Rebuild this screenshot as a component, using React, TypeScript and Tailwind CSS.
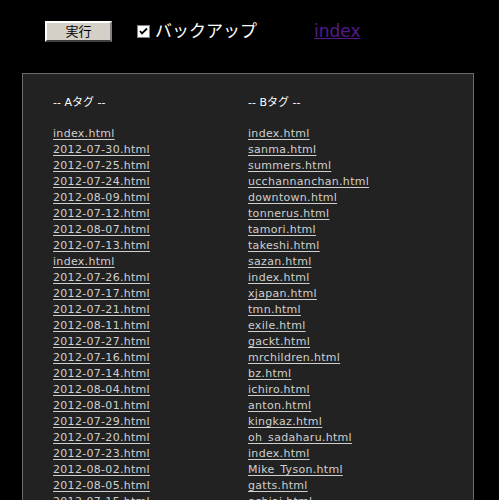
import React from "react";

const aTags = [
  "index.html",
  "2012-07-30.html",
  "2012-07-25.html",
  "2012-07-24.html",
  "2012-08-09.html",
  "2012-07-12.html",
  "2012-08-07.html",
  "2012-07-13.html",
  "index.html",
  "2012-07-26.html",
  "2012-07-17.html",
  "2012-07-21.html",
  "2012-08-11.html",
  "2012-07-27.html",
  "2012-07-16.html",
  "2012-07-14.html",
  "2012-08-04.html",
  "2012-08-01.html",
  "2012-07-29.html",
  "2012-07-20.html",
  "2012-07-23.html",
  "2012-08-02.html",
  "2012-08-05.html",
  "2012-07-15.html",
];

const bTags = [
  "index.html",
  "sanma.html",
  "summers.html",
  "ucchannanchan.html",
  "downtown.html",
  "tonnerus.html",
  "tamori.html",
  "takeshi.html",
  "sazan.html",
  "index.html",
  "xjapan.html",
  "tmn.html",
  "exile.html",
  "gackt.html",
  "mrchildren.html",
  "bz.html",
  "ichiro.html",
  "anton.html",
  "kingkaz.html",
  "oh_sadaharu.html",
  "index.html",
  "Mike_Tyson.html",
  "gatts.html",
  "ochiai.html",
];

const TagColumn: React.FC<{ title: string; items: string[] }> = ({ title, items }) => {
  return (
    <div className="w-[195px] shrink-0">
      <p className="text-[11px] leading-[16px] text-white">{title}</p>
      <ul className="mt-[15px]">
        {items.map((item, i) => (
          <li key={i} className="text-[11px] leading-[16px] tracking-[0.3px]">
            <a href="#" className="text-[#cfcfcf] underline underline-offset-2">
              {item}
            </a>
          </li>
        ))}
      </ul>
    </div>
  );
};

export default function App() {
  return (
    <div
      className="h-[500px] overflow-hidden bg-black"
      style={{ fontFamily: '"DejaVu Sans", "Noto Sans CJK JP", sans-serif' }}
    >
      <div className="flex items-center pt-[21px] pl-[45px] h-[21px] box-content">
        <button className="w-[67px] h-[21px] bg-[#d4d0c8] text-black text-[13px] leading-none border-2 border-t-white border-l-white border-b-[#404040] border-r-[#808080]">
          実行
        </button>
        <label className="flex items-center ml-[25px] text-white text-[17px]">
          <span className="w-[13px] h-[13px] bg-white border border-[#808080] flex items-center justify-center">
            <svg viewBox="0 0 9 9" className="w-[9px] h-[9px]">
              <path d="M1 4 L3 6.5 L8 1.5" stroke="black" strokeWidth="1.8" fill="none" />
            </svg>
          </span>
          <span className="ml-[5px]">バックアップ</span>
        </label>
        <a href="#" className="ml-[57px] text-[17px] text-[#551a8b] underline">
          index
        </a>
      </div>
      <div className="mt-[31px] ml-[22px] w-[452px] border border-[#6a6a6a] bg-[#222222] pt-[21px] pl-[30px] flex">
        <TagColumn title="-- Aタグ --" items={aTags} />
        <TagColumn title="-- Bタグ --" items={bTags} />
      </div>
    </div>
  );
}
